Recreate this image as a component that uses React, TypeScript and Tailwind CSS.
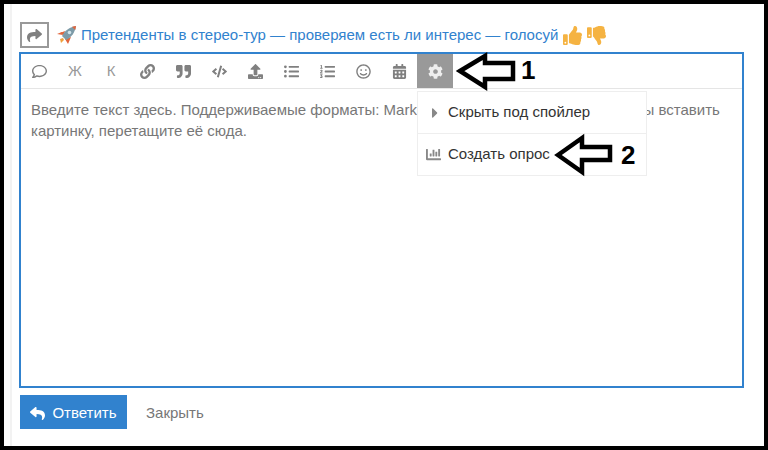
import React from 'react'
import {
  FaCaretRight,
  FaChartBar,
  FaCode,
  FaCog,
  FaLink,
  FaListOl,
  FaListUl,
  FaQuoteRight,
  FaRegComment,
  FaRegSmile,
  FaReply,
  FaShare,
  FaCalendarAlt,
  FaThumbsDown,
  FaThumbsUp,
  FaUpload,
} from 'react-icons/fa'

const ToolButton = ({ children, active }: { children: React.ReactNode; active?: boolean }) => (
  <div className={`flex h-[34px] w-9 items-center justify-center text-[15px] ${active ? 'bg-[#999999] text-[#eeeeee]' : 'text-[#808080]'}`}>
    {children}
  </div>
)

const Rocket = () => (
  <svg width="21" height="20" viewBox="0 0 21 20" className="shrink-0">
    <path d="M4 8 L9 6 L8 10 Z M9 14 L15 12 L12 19 Z" fill="#e2643a" />
    <path d="M1 9 L6 7 L7 10 Z" fill="#e2643a" />
    <path d="M6 11 C9 5 14 2 20 1 C19 7 16 12 10 15 Z" fill="#7d9ba8" />
    <path d="M16 1.8 L20 1 L19.3 5 Z" fill="#e2643a" />
    <circle cx="13.5" cy="7.5" r="1.8" fill="#cfe3ea" />
    <path d="M4 14 L7 13 L8 15 L5 18 Z" fill="#f0a13c" />
  </svg>
)

const Arrow = ({ points, className }: { points: string; className: string }) => (
  <svg className={`absolute ${className}`} viewBox="0 0 70 46" width="70" height="46">
    <polygon points={points} fill="white" stroke="black" strokeWidth="4.5" strokeLinejoin="miter" />
  </svg>
)

export default function App() {
  return (
    <div className="relative h-[450px] w-[768px] overflow-hidden border-4 border-black bg-white font-['Liberation_Sans',sans-serif] text-[15px]">
      <div className="ml-[6px] h-full border-l-2 border-[#f2f2f2] pl-2 pr-[20px] pt-[14px]">
        <div className="flex h-[34px] items-center gap-[7px]">
          <div className="flex h-[26px] w-[29px] items-center justify-center border-2 border-[#999999] text-[15px] text-[#808080]">
            <FaShare />
          </div>
          <Rocket />
          <span className="-ml-[3px] text-[#3182ce]">Претенденты в стерео-тур — проверяем есть ли интерес — голосуй</span>
          <FaThumbsUp className="-ml-[2px] text-[19px] text-[#f5b342]" />
          <FaThumbsDown className="-ml-[2px] text-[19px] text-[#f5b342]" />
        </div>

        <div className="-ml-[1px] h-[336px] border-2 border-[#3182ce]">
          <div className="flex h-[35px] border-b border-[#e5e5e5]">
            <ToolButton><FaRegComment /></ToolButton>
            <ToolButton><span className="text-[#999999]">Ж</span></ToolButton>
            <ToolButton><span className="text-[#999999]">К</span></ToolButton>
            <ToolButton><FaLink /></ToolButton>
            <ToolButton><FaQuoteRight /></ToolButton>
            <ToolButton><FaCode /></ToolButton>
            <ToolButton><FaUpload /></ToolButton>
            <ToolButton><FaListUl /></ToolButton>
            <ToolButton><FaListOl /></ToolButton>
            <ToolButton><FaRegSmile /></ToolButton>
            <ToolButton><FaCalendarAlt /></ToolButton>
            <ToolButton active><FaCog /></ToolButton>
          </div>
          <p className="px-[10px] pt-[10px] leading-[21px] text-[#777777]">
            Введите текст здесь. Поддерживаемые форматы: Markdown, и безопасный HTML. Чтобы вставить картинку, перетащите её сюда.
          </p>
        </div>

        <div className="mt-[7px] flex items-center">
          <div className="flex h-[34px] w-[107px] items-center justify-center gap-[7px] bg-[#3182ce] pt-[2px] text-white">
            <FaReply className="text-[15px]" />
            Ответить
          </div>
          <span className="ml-[19px] pt-[2px] text-[#777777]">Закрыть</span>
        </div>
      </div>

      <div className="absolute left-[413px] top-[87px] w-[230px] border border-[#eeeeee] bg-white text-[#333333]">
        <div className="flex h-[42px] items-center border-b border-[#eeeeee] pl-[4px]">
          <FaCaretRight className="w-[26px] text-[16px] text-[#888888]" />
          Скрыть под спойлер
        </div>
        <div className="flex h-[41px] items-center pl-[8px]">
          <FaChartBar className="mr-[7px] w-[15px] text-[15px] text-[#888888]" />
          Создать опрос
        </div>
      </div>

      <Arrow className="left-[448px] top-[43px]" points="8,24 33,9 33,16 61,16 61,32 33,32 33,40" />
      <span className="absolute left-[517px] top-[51px] text-[26px] font-bold leading-[30px] text-black">1</span>
      <Arrow className="left-[546px] top-[128px]" points="8,23 32,6 32,15 60,15 60,28 32,28 32,40" />
      <span className="absolute left-[617px] top-[136px] text-[26px] font-bold leading-[30px] text-black">2</span>
    </div>
  )
}
